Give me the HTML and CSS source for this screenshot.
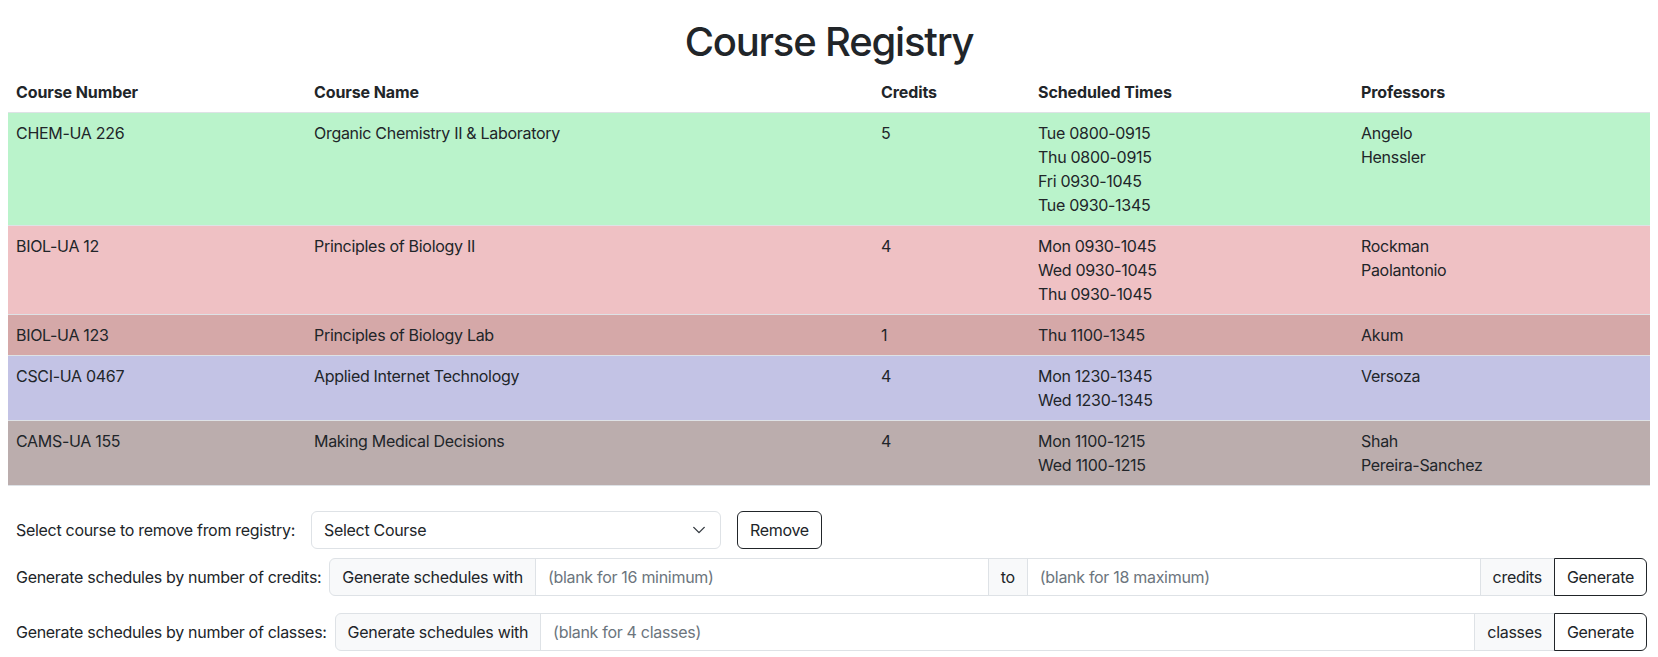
FILE: index.html
```html
<!DOCTYPE html>
<html lang="en">
<head>
<meta charset="utf-8">
<title>Course Registry</title>
<link rel="stylesheet" href="styles.css">
</head>
<body>
<div class="page">
  <h1 class="title">Course Registry</h1>
  <table class="registry">
    <colgroup>
      <col class="c-num">
      <col class="c-name">
      <col class="c-cred">
      <col class="c-time">
      <col class="c-prof">
    </colgroup>
    <thead>
      <tr>
        <th>Course Number</th>
        <th>Course Name</th>
        <th>Credits</th>
        <th>Scheduled Times</th>
        <th>Professors</th>
      </tr>
    </thead>
    <tbody>
      <tr class="r-green">
        <td>CHEM-UA 226</td>
        <td>Organic Chemistry II &amp; Laboratory</td>
        <td>5</td>
        <td><div>Tue 0800-0915</div><div>Thu 0800-0915</div><div>Fri 0930-1045</div><div>Tue 0930-1345</div></td>
        <td><div>Angelo</div><div>Henssler</div></td>
      </tr>
      <tr class="r-pink">
        <td>BIOL-UA 12</td>
        <td>Principles of Biology II</td>
        <td>4</td>
        <td><div>Mon 0930-1045</div><div>Wed 0930-1045</div><div>Thu 0930-1045</div></td>
        <td><div>Rockman</div><div>Paolantonio</div></td>
      </tr>
      <tr class="r-rose">
        <td>BIOL-UA 123</td>
        <td>Principles of Biology Lab</td>
        <td>1</td>
        <td><div>Thu 1100-1345</div></td>
        <td><div>Akum</div></td>
      </tr>
      <tr class="r-blue">
        <td>CSCI-UA 0467</td>
        <td>Applied Internet Technology</td>
        <td>4</td>
        <td><div>Mon 1230-1345</div><div>Wed 1230-1345</div></td>
        <td><div>Versoza</div></td>
      </tr>
      <tr class="r-taupe">
        <td>CAMS-UA 155</td>
        <td>Making Medical Decisions</td>
        <td>4</td>
        <td><div>Mon 1100-1215</div><div>Wed 1100-1215</div></td>
        <td><div>Shah</div><div>Pereira-Sanchez</div></td>
      </tr>
    </tbody>
  </table>

  <div class="forms">
    <div class="form-row row-remove">
      <label class="row-label gap-lg">Select course to remove from registry:</label>
      <div class="select">
        <span>Select Course</span>
        <svg class="chev" width="16" height="16" viewBox="0 0 16 16"><path d="M2 5l6 6 6-6" fill="none" stroke="#343a40" stroke-width="1.6" stroke-linecap="round" stroke-linejoin="round"/></svg>
      </div>
      <button class="btn btn-solo">Remove</button>
    </div>

    <div class="form-row row-credits">
      <label class="row-label">Generate schedules by number of credits:</label>
      <div class="group">
        <span class="addon first">Generate schedules with</span>
        <input class="field" type="text" placeholder="(blank for 16 minimum)">
        <span class="addon">to</span>
        <input class="field" type="text" placeholder="(blank for 18 maximum)">
        <span class="addon">credits</span>
        <button class="btn btn-end">Generate</button>
      </div>
    </div>

    <div class="form-row row-classes">
      <label class="row-label">Generate schedules by number of classes:</label>
      <div class="group">
        <span class="addon first">Generate schedules with</span>
        <input class="field" type="text" placeholder="(blank for 4 classes)">
        <span class="addon">classes</span>
        <button class="btn btn-end">Generate</button>
      </div>
    </div>
  </div>
</div>
</body>
</html>
```

FILE: styles.css
```css
* { box-sizing: border-box; }

body {
  margin: 0;
  font-family: Inter, "Noto Sans", "Liberation Sans", sans-serif;
  font-size: 16px;
  line-height: 1.5;
  color: #212529;
  background: #fff;
  letter-spacing: -0.3px;
}

.page {
  padding: 0 8px;
}

.title {
  text-align: center;
  font-size: 40px;
  font-weight: 500;
  line-height: 1.2;
  margin: 18px 0 6px;
  letter-spacing: -1.2px;
}

.registry {
  width: 100%;
  border-collapse: collapse;
  table-layout: fixed;
}

.c-num { width: 298px; }
.c-name { width: 567px; }
.c-cred { width: 157px; }
.c-time { width: 323px; }

.registry th {
  text-align: left;
  font-weight: 700;
  padding: 8px;
  border-bottom: 1px solid #dee2e6;
  letter-spacing: -0.1px;
}

.registry td {
  padding: 8px;
  vertical-align: top;
  border-bottom: 1px solid #dee2e6;
}

.r-green { background: #baf3cb; }
.r-pink { background: #efc1c4; }
.r-rose { background: #d5a8a8; }
.r-blue { background: #c3c3e5; }
.r-taupe { background: #bbadad; }

.forms {
  margin-top: 25px;
}

.form-row {
  display: flex;
  align-items: center;
  padding-left: 8px;
}

.row-remove { margin-bottom: 9px; }
.row-credits { margin-bottom: 17px; }

.row-label {
  margin-right: 8px;
  white-space: nowrap;
}

.row-label.gap-lg { margin-right: 16px; }

.select {
  width: 410px;
  height: 38px;
  display: flex;
  align-items: center;
  justify-content: space-between;
  padding: 6px 14px 6px 12px;
  border: 1px solid #dee2e6;
  border-radius: 6px;
  background: #fff;
}

.chev { width: 14px; height: 14px; }

.btn {
  font: inherit;
  letter-spacing: inherit;
  color: #212529;
  background: #fff;
  border: 1px solid #212529;
  padding: 6px 12px;
  height: 38px;
  line-height: 24px;
  cursor: pointer;
}

.btn-solo {
  margin-left: 16px;
  border-radius: 6px;
}

.group {
  flex: 1;
  display: flex;
  height: 38px;
  margin-right: 3px;
}

.addon {
  display: flex;
  align-items: center;
  padding: 6px 12px;
  background: #f8f9fa;
  border: 1px solid #dee2e6;
  margin-left: -1px;
  white-space: nowrap;
}

.addon.first {
  margin-left: 0;
  border-radius: 6px 0 0 6px;
}

.field {
  flex: 1;
  min-width: 0;
  font: inherit;
  letter-spacing: inherit;
  color: #212529;
  padding: 6px 12px;
  border: 1px solid #dee2e6;
  margin-left: -1px;
  background: #fff;
  outline: none;
}

.field::placeholder {
  color: #6c757d;
}

.btn-end {
  border-radius: 0 6px 6px 0;
  margin-left: -1px;
}
```
